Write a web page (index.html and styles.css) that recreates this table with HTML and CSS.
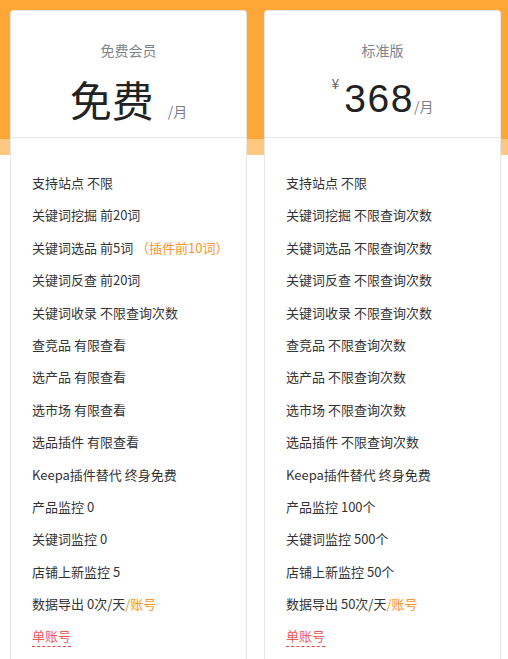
FILE: index.html
```html
<!DOCTYPE html>
<html lang="zh">
<head>
<meta charset="utf-8">
<title>会员</title>
<link rel="stylesheet" href="styles.css">
</head>
<body>
<div class="plans">
  <div class="card">
    <div class="head">
      <div class="name">免费会员</div>
      <div class="price"><span class="big cjk">免费</span><span class="unit gap">/月</span></div>
    </div>
    <ul class="list">
      <li>支持站点 不限</li>
      <li>关键词挖掘 前20词</li>
      <li>关键词选品 前5词 <span class="hl">（插件前10词）</span></li>
      <li>关键词反查 前20词</li>
      <li>关键词收录 不限查询次数</li>
      <li>查竞品 有限查看</li>
      <li>选产品 有限查看</li>
      <li>选市场 有限查看</li>
      <li>选品插件 有限查看</li>
      <li>Keepa插件替代 终身免费</li>
      <li>产品监控 0</li>
      <li>关键词监控 0</li>
      <li>店铺上新监控 5</li>
      <li>数据导出 0次/天<span class="hl">/账号</span></li>
      <li><span class="acc">单账号</span></li>
    </ul>
  </div>
  <div class="card">
    <div class="head">
      <div class="name">标准版</div>
      <div class="price"><span class="cur">¥</span><span class="big num">368</span><span class="unit">/月</span></div>
    </div>
    <ul class="list">
      <li>支持站点 不限</li>
      <li>关键词挖掘 不限查询次数</li>
      <li>关键词选品 不限查询次数</li>
      <li>关键词反查 不限查询次数</li>
      <li>关键词收录 不限查询次数</li>
      <li>查竞品 不限查询次数</li>
      <li>选产品 不限查询次数</li>
      <li>选市场 不限查询次数</li>
      <li>选品插件 不限查询次数</li>
      <li>Keepa插件替代 终身免费</li>
      <li>产品监控 100个</li>
      <li>关键词监控 500个</li>
      <li>店铺上新监控 50个</li>
      <li>数据导出 50次/天<span class="hl">/账号</span></li>
      <li><span class="acc">单账号</span></li>
    </ul>
  </div>
</div>
</body>
</html>
```

FILE: styles.css
```css
html, body {
  margin: 0;
  padding: 0;
}
body {
  width: 508px;
  height: 659px;
  overflow: hidden;
  font-family: "Noto Sans CJK SC", "Noto Sans", sans-serif;
  background: linear-gradient(to bottom, #ffa736 0, #ffa736 139px, #ffc77f 139px, #ffc77f 155px, #ffffff 155px);
  color: #333;
}
.plans {
  display: flex;
  gap: 17px;
  padding: 10px 0 0 10px;
}
.card {
  box-sizing: border-box;
  width: 237px;
  height: 649px;
  background: #fff;
  border: 1px solid #e6e6e6;
  border-bottom: none;
  border-radius: 4px 4px 0 0;
}
.head {
  height: 127px;
  box-sizing: border-box;
  border-bottom: 1px solid #e6e6e6;
  padding-top: 29px;
  text-align: center;
}
.name {
  font-size: 14px;
  line-height: 20px;
  color: #7f848c;
}
.price {
  display: flex;
  justify-content: center;
  align-items: baseline;
  height: 50px;
  margin-top: 14px;
  color: #222;
}
.big {
  line-height: 50px;
}
.cjk {
  font-size: 42px;
}
.num {
  font-family: "Liberation Sans", "Noto Sans", sans-serif;
  font-size: 39px;
  letter-spacing: 1.5px;
}
.cur {
  align-self: flex-start;
  font-size: 14px;
  line-height: 14px;
  margin-top: 2px;
  margin-right: 5px;
  color: #666;
}
.unit {
  font-size: 14px;
  color: #7a7f87;
}
.gap {
  margin-left: 14px;
}
.list {
  list-style: none;
  margin: 0;
  padding: 29px 0 0 21px;
}
.list li {
  font-size: 13px;
  height: 32.4px;
  line-height: 32px;
  white-space: nowrap;
}
.hl {
  color: #f7952d;
}
.acc {
  color: #ee5b5b;
  border-bottom: 1px dashed #e64848;
  padding-bottom: 1px;
}
```
